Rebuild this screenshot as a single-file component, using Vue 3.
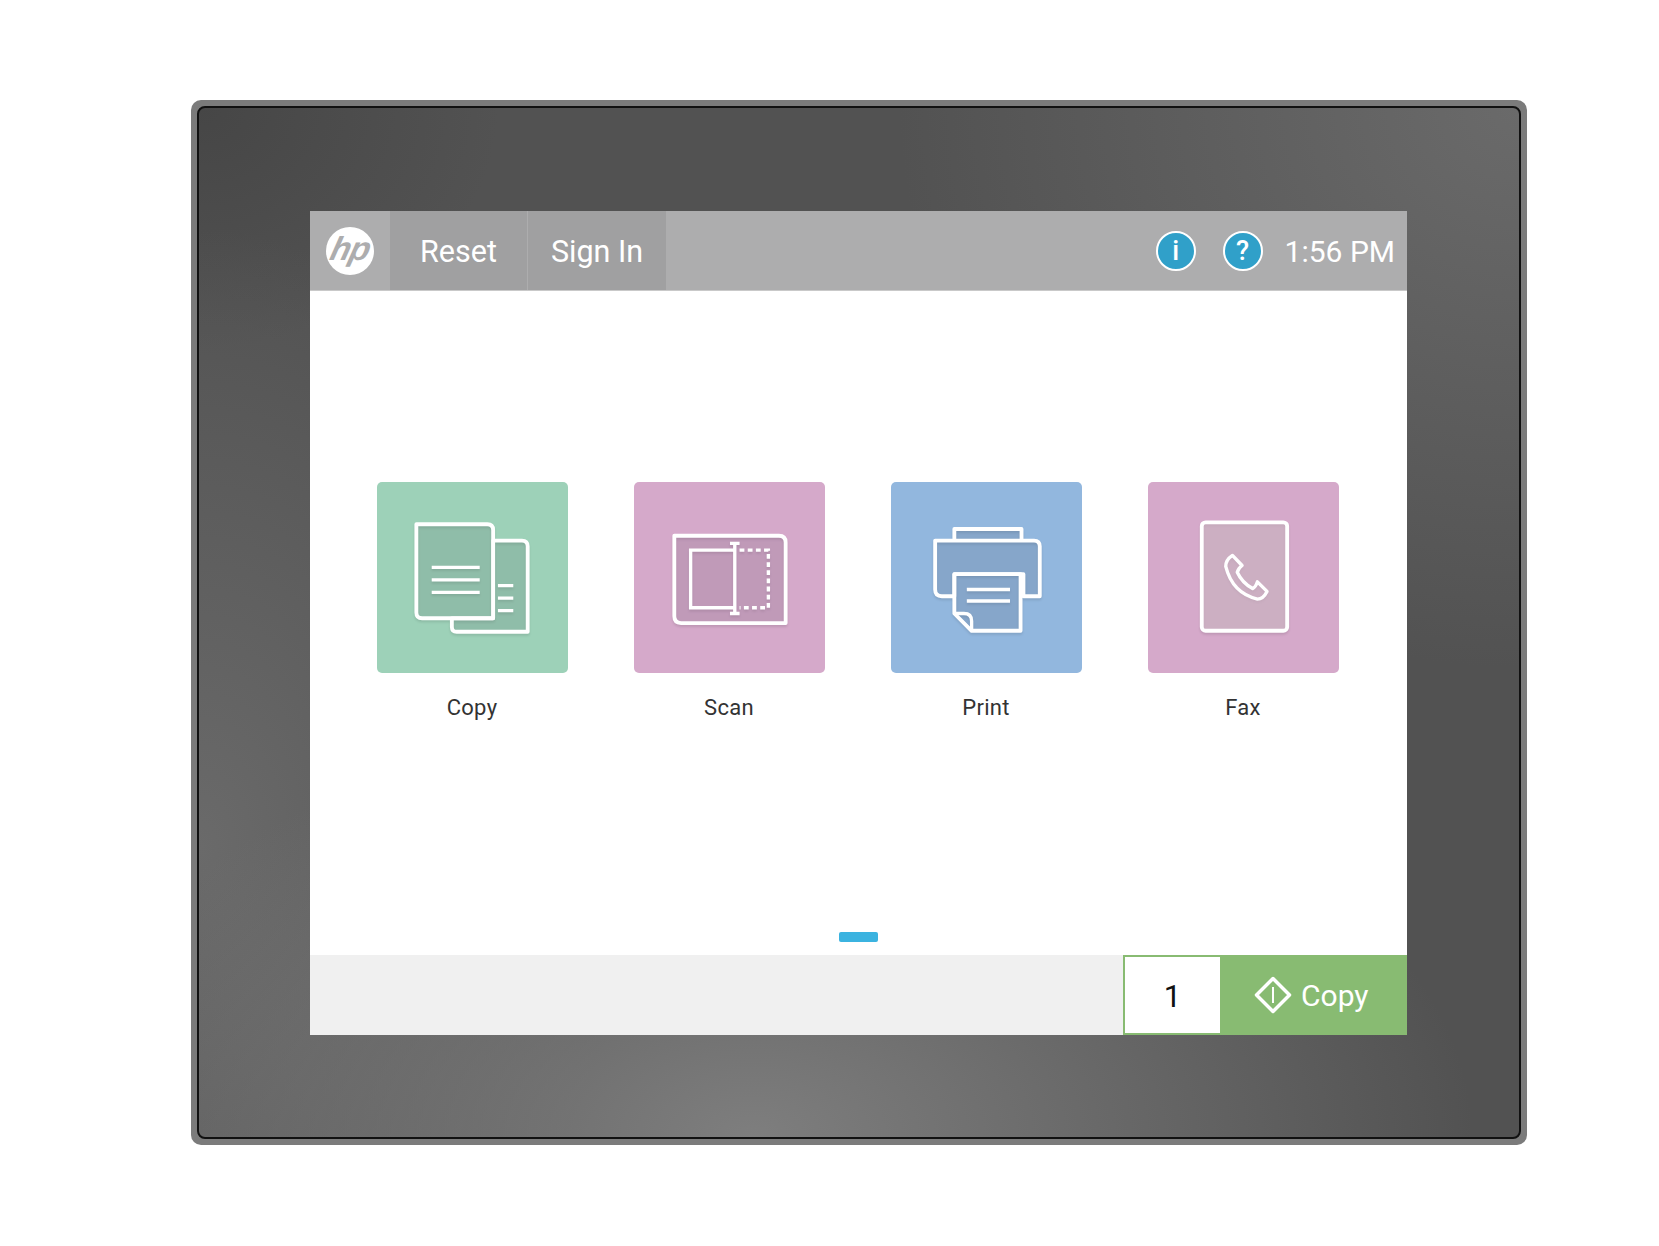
<template>
  <div class="page">
    <div class="bezel">
      <div class="bezel-inner">
        <div class="screen">
          <!-- top bar -->
          <div class="topbar">
            <div class="logo-cell">
              <svg class="logo" viewBox="0 0 48 48">
                <circle cx="24" cy="24" r="24" fill="#fff" />
                <text x="30" y="33" text-anchor="middle" transform="skewX(-14)" class="logo-text">hp</text>
              </svg>
            </div>
            <div class="top-btn reset">Reset</div>
            <div class="top-btn signin">Sign In</div>
            <div class="top-right">
              <div class="round-btn info">i</div>
              <div class="round-btn help">?</div>
              <div class="clock">1:56 PM</div>
            </div>
          </div>

          <!-- home tiles -->
          <div class="main">
            <div class="tiles">
              <div v-for="tile in tiles" :key="tile.name" class="tile">
                <div class="tile-box" :class="tile.name.toLowerCase()">
                  <svg v-if="tile.name === 'Copy'" class="tile-icon" viewBox="-4 -4 199 199">
                    <path class="pane" d="M74 138v9q0 5 5 5h74V63q0-6-6-6h-30v81z" />
                    <path class="pane" d="M37 40h74q6 0 6 6v92H43q-6 0-6-6z" />
                    <path class="ln" d="M53 85h50M53 98h50M53 111h50M122 104h16M122 117h16M122 130h16" />
                  </svg>
                  <svg v-else-if="tile.name === 'Scan'" class="tile-icon" viewBox="-4 -4 199 199">
                    <path class="pane" d="M38 52h109q7 0 7 7v84H45q-7 0-7-7z" />
                    <path class="ln" d="M55 67h46v60H55zM101 60v73M96 60h10M96 133h10" />
                    <path class="ln dash" d="M106 67h30v60h-30" />
                  </svg>
                  <svg v-else-if="tile.name === 'Print'" class="tile-icon" viewBox="-4 -4 199 199">
                    <path class="pane" d="M62 57V45h70v12" />
                    <path class="pane" d="M59 115H49q-7 0-7-7V57h103q6 0 6 6v52h-17V92H62v23z" />
                    <path class="pane" d="M62 92h69v59H80l-18-18z" />
                    <path class="ln" d="M62 133h10q8 0 8 8v10M75 108h45M75 120h45" />
                  </svg>
                  <svg v-else class="tile-icon" viewBox="-4 -4 199 199">
                    <rect class="pane light" x="52" y="38" width="89" height="113" rx="4" />
                    <path class="phone" d="M84 72.500L94 83Q90 86 89 90Q94 101 105 107Q108 106 110 100L120 110Q116 118 110 118Q84 112 77 84Q77 77 84 72.500Z" />
                  </svg>
                </div>
                <div class="tile-label">{{ tile.name }}</div>
              </div>
            </div>
            <div class="page-dot"></div>
          </div>

          <!-- bottom bar -->
          <div class="bottombar">
            <div class="count">1</div>
            <div class="start">
              <svg class="start-icon" viewBox="0 0 38 38">
                <path d="M19 2.500L35.500 19 19 35.500 2.500 19z" />
                <path d="M19 11v16" class="thin" />
              </svg>
              <span>Copy</span>
            </div>
          </div>
        </div>
      </div>
    </div>
  </div>
</template>

<script setup>
const tiles = [{ name: 'Copy' }, { name: 'Scan' }, { name: 'Print' }, { name: 'Fax' }]
</script>

<style>
body {
  background: #fff;
}
</style>

<style scoped>
.page {
  width: 1659px;
  height: 1246px;
  padding: 100px 0 0 191px;
  box-sizing: border-box;
  font-family: Roboto, 'Liberation Sans', sans-serif;
  overflow: hidden;
}

.bezel {
  width: 1336px;
  height: 1045px;
  box-sizing: border-box;
  padding: 6px;
  border-radius: 10px;
  background: #7b7b7b;
}

.bezel-inner {
  height: 100%;
  box-sizing: border-box;
  padding: 103px 112px 102px 111px;
  border: 2px solid #111;
  border-radius: 8px;
  background:
    radial-gradient(ellipse 720px 420px at 42% 100%, #7e7e7e 0%, rgba(126, 126, 126, 0) 100%),
    radial-gradient(ellipse 620px 560px at 100% 0%, #6a6a6a 0%, rgba(106, 106, 106, 0) 100%),
    radial-gradient(ellipse 420px 620px at 0% 72%, #6a6a6a 0%, rgba(106, 106, 106, 0) 100%),
    radial-gradient(ellipse 300px 240px at 0% 0%, #464646 0%, rgba(70, 70, 70, 0) 100%),
    #525252;
}

.screen {
  height: 100%;
  display: flex;
  flex-direction: column;
  background: #fff;
}

.topbar {
  height: 79px;
  flex: none;
  display: flex;
  background: #adadae;
  border-bottom: 1px solid #c9c9c9;
  color: #fff;
}

.logo-cell {
  width: 80px;
  display: flex;
  align-items: center;
  justify-content: center;
}

.logo {
  width: 48px;
  height: 48px;
}

.logo-text {
  font-family: 'Liberation Sans', sans-serif;
  font-style: italic;
  font-weight: 700;
  font-size: 33px;
  letter-spacing: -1px;
  fill: #adadae;
}

.top-btn {
  display: flex;
  align-items: center;
  justify-content: center;
  padding-top: 2px;
  box-sizing: border-box;
  background: #a0a0a1;
  font-size: 30.500px;
}

.reset {
  width: 137px;
}

.signin {
  width: 138px;
  margin-left: 1px;
}

.top-right {
  margin-left: auto;
  display: flex;
  align-items: center;
  padding-right: 12px;
}

.round-btn {
  width: 40px;
  height: 40px;
  box-sizing: border-box;
  border: 2px solid #fff;
  border-radius: 50%;
  background: #30a0c9;
  display: flex;
  align-items: center;
  justify-content: center;
  font-size: 27px;
  font-weight: 500;
}

.help {
  margin-left: 27px;
}

.clock {
  margin-left: 22px;
  padding-top: 2px;
  font-size: 30px;
}

.main {
  flex: 1;
  display: flex;
  flex-direction: column;
  align-items: center;
  padding-top: 191px;
  padding-right: 2px;
}

.tiles {
  display: flex;
  gap: 66px;
}

.tile {
  width: 191px;
  display: flex;
  flex-direction: column;
  align-items: center;
}

.tile-box {
  width: 191px;
  height: 191px;
  border-radius: 5px;
}

.tile-box.copy {
  background: #9dd1b8;
}

.tile-box.scan,
.tile-box.fax {
  background: #d5a9ca;
}

.tile-box.print {
  background: #92b7de;
}

.tile-icon {
  display: block;
  width: 191px;
  height: 191px;
  filter: drop-shadow(0 2px 1px rgba(0, 0, 0, 0.1));
}

.pane {
  fill: rgba(60, 60, 70, 0.12);
  stroke: #fff;
  stroke-width: 4;
  stroke-linejoin: round;
}

.pane.light {
  fill: rgba(205, 190, 195, 0.45);
}

.ln {
  fill: none;
  stroke: #fff;
  stroke-width: 3.500;
}

.dash {
  stroke-dasharray: 5 3.500;
}

.phone {
  fill: none;
  stroke: #fff;
  stroke-width: 3.500;
  stroke-linejoin: round;
}

.tile-label {
  margin-top: 21px;
  font-size: 22px;
  letter-spacing: 0.300px;
  line-height: 28px;
  color: #333;
}

.page-dot {
  width: 39px;
  height: 10px;
  margin-top: auto;
  margin-bottom: 13px;
  margin-left: 2px;
  border-radius: 2px;
  background: #3bb3e0;
}

.bottombar {
  height: 80px;
  flex: none;
  display: flex;
  justify-content: flex-end;
  background: #f0f0f0;
}

.count {
  width: 97px;
  box-sizing: border-box;
  padding-top: 2px;
  border: 2px solid #88bb72;
  border-right: 0;
  background: #fff;
  display: flex;
  align-items: center;
  justify-content: center;
  font-size: 31px;
  color: #111;
}

.start {
  width: 187px;
  box-sizing: border-box;
  padding-left: 34px;
  display: flex;
  align-items: center;
  gap: 9px;
  background: #88bb72;
  color: #fff;
  font-size: 30px;
}

.start-icon {
  width: 38px;
  height: 38px;
  fill: none;
  stroke: #fff;
  stroke-width: 3.500;
  stroke-linejoin: round;
}

.start-icon .thin {
  stroke-width: 2;
}
</style>
